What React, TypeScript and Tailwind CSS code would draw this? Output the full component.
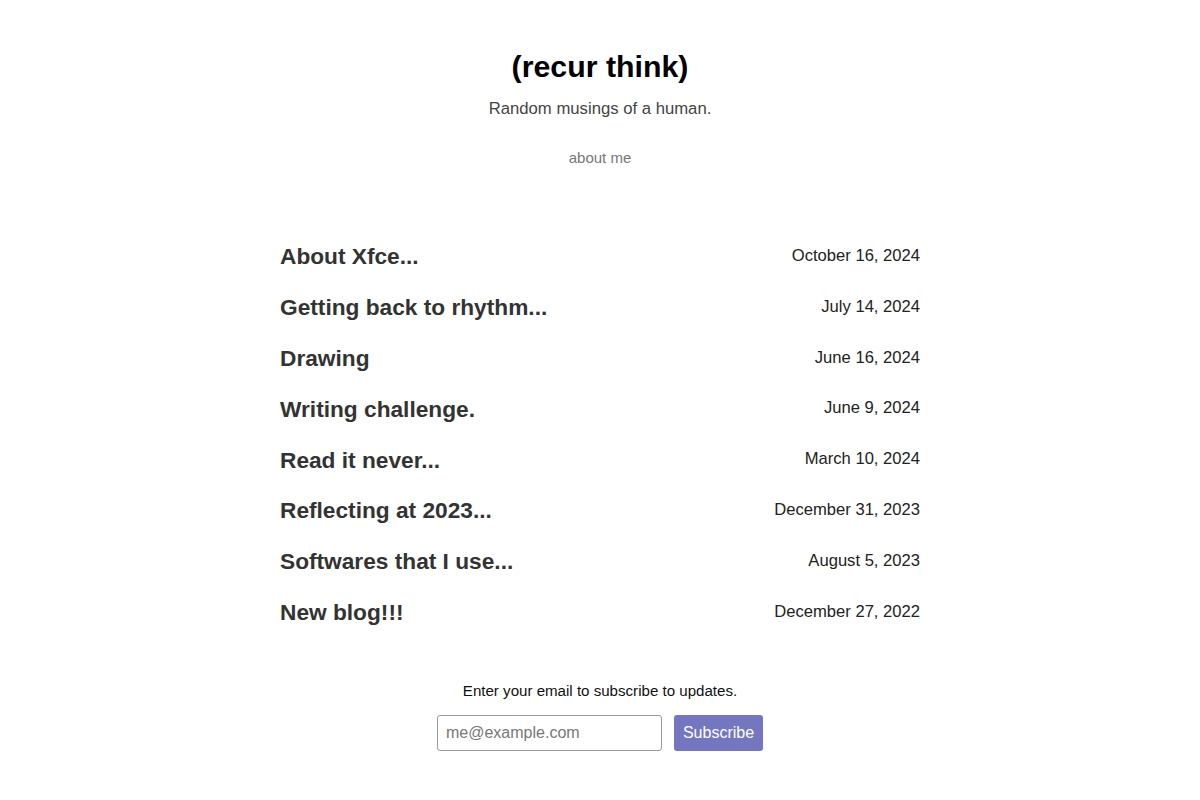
import React from "react";

const posts = [
  { title: "About Xfce...", date: "October 16, 2024" },
  { title: "Getting back to rhythm...", date: "July 14, 2024" },
  { title: "Drawing", date: "June 16, 2024" },
  { title: "Writing challenge.", date: "June 9, 2024" },
  { title: "Read it never...", date: "March 10, 2024" },
  { title: "Reflecting at 2023...", date: "December 31, 2023" },
  { title: "Softwares that I use...", date: "August 5, 2023" },
  { title: "New blog!!!", date: "December 27, 2022" },
];

export default function App() {
  return (
    <div className="min-h-screen bg-white font-['Liberation_Sans',Arial,sans-serif]">
      <header className="pt-[46px] text-center">
        <h1 className="text-[30.3px] leading-[42px] font-bold text-black">(recur think)</h1>
        <p className="mt-[10px] text-[16.7px] leading-[22px] text-[#444]">Random musings of a human.</p>
        <nav className="mt-[26px]">
          <a href="#" className="text-[15px] leading-[20px] text-[#777]">about me</a>
        </nav>
      </header>

      <main className="mx-auto w-[640px] mt-[61px]">
        <ul className="flex flex-col">
          {posts.map((p) => (
            <li key={p.title} className="flex h-[50.8px] items-center justify-between">
              <a href="#" className="text-[22.7px] font-bold text-[#333]">{p.title}</a>
              <span className="text-[16.6px] text-[#222]">{p.date}</span>
            </li>
          ))}
        </ul>
      </main>

      <section className="mt-[44px] flex flex-col items-center">
        <p className="text-[15.1px] leading-[20px] text-[#111]">Enter your email to subscribe to updates.</p>
        <form className="mt-[14px] flex gap-[12px]" onSubmit={(e) => e.preventDefault()}>
          <input
            type="email"
            placeholder="me@example.com"
            className="h-[36px] w-[225px] rounded-[3px] border border-[#999] px-[8px] text-[16px] placeholder:text-[#777] outline-none"
          />
          <button type="submit" className="h-[36px] w-[89px] rounded-[3px] bg-[#7477bf] text-[16px] text-white">
            Subscribe
          </button>
        </form>
      </section>
    </div>
  );
}
